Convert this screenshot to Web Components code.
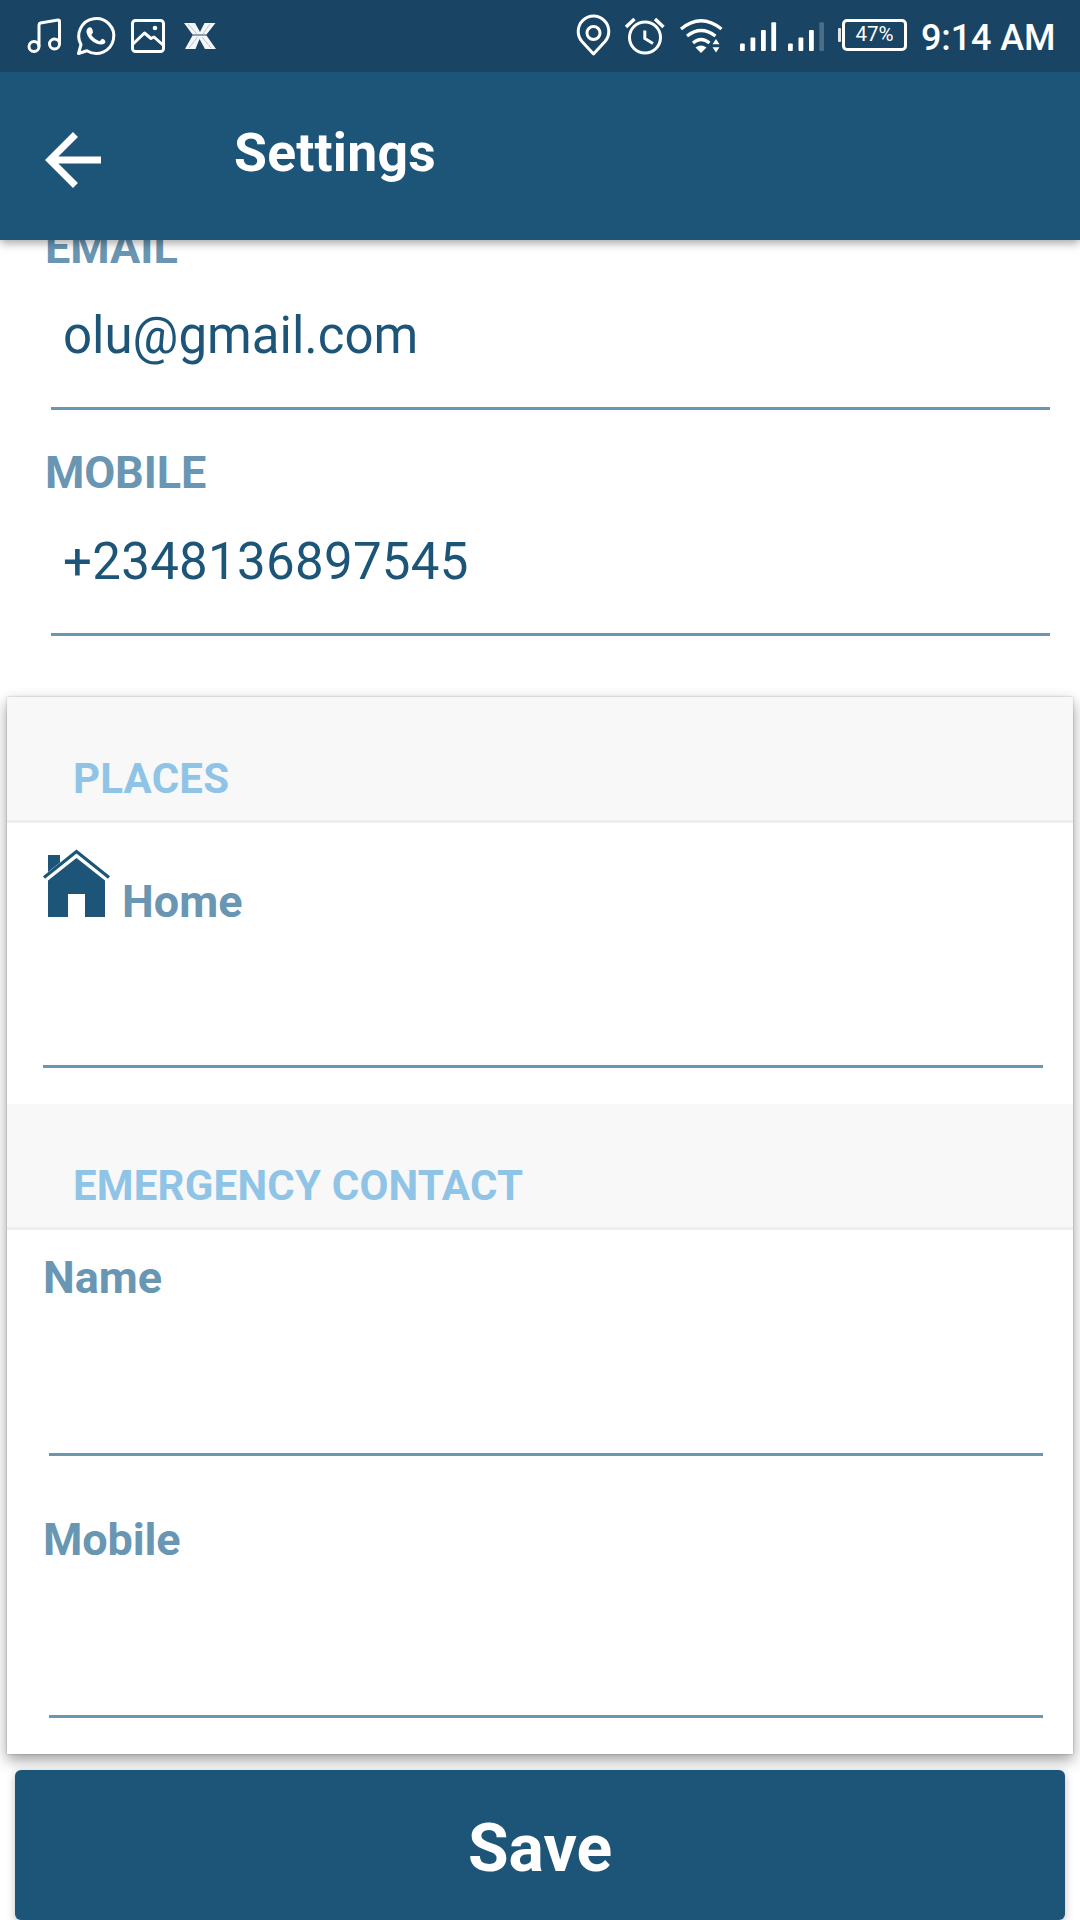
<!DOCTYPE html>
<html lang="en">
<head>
<meta charset="utf-8">
<title>Settings</title>
<style>
html,body{margin:0;padding:0;background:#fff}
body{width:1080px;height:1920px;overflow:hidden;font-family:Roboto,"Noto Sans",sans-serif}
</style>
</head>
<body>
<settings-screen></settings-screen>
<script>
function define(name, html) {
  const t = document.createElement('template');
  t.innerHTML = html;
  customElements.define(name, class extends HTMLElement {
    constructor() {
      super();
      this.attachShadow({ mode: 'open' }).appendChild(t.content.cloneNode(true));
    }
  });
}

define('status-bar', `
<style>
:host{display:flex;height:72px;background:#194463;color:#fff;align-items:flex-start;justify-content:space-between;box-sizing:border-box}
svg{display:block;flex:none}
.right{display:flex;align-items:flex-start}
.bat{display:flex;margin-top:19px;margin-left:14px}
.nub{width:3px;height:14px;background:#dfe6eb;margin:9px 1px 0 0;border-radius:1px}
.cell{box-sizing:border-box;width:65px;height:32px;border:3px solid #fff;border-radius:5px;font-size:20.5px;line-height:25px;text-align:center}
time{font-weight:500;font-size:36px;line-height:44px;margin:16px 0 0 14px;width:159px;white-space:nowrap;letter-spacing:-.12px}
</style>
<svg width="270" height="72" viewBox="0 0 270 72" fill="none" stroke="#fff" stroke-width="3">
 <circle cx="34" cy="46.500" r="5"/><circle cx="54.500" cy="44" r="5"/>
 <path d="M39 46.500V25Q39 23.500 40.500 23L58 20Q59.500 20 59.500 21.500V44"/>
 <path d="M78.500 53.500L81 44.500A17.500 17.500 0 1 1 87 50.800Z" stroke-linejoin="round"/>
 <path d="M89.500 27.200Q92.500 27 93 32.500L91.300 35Q95 40 99.800 41.200L102 38.800Q106 39.600 105.200 43Q102 45.600 97 43.800Q88.500 40.500 86.500 32.500Q86 28.500 89.500 27.200Z" fill="#fff" stroke="none"/>
 <rect x="132.500" y="20.500" width="31" height="31" rx="3"/>
 <path d="M133 44L144.500 33L151 38.500L154 37L163 45" stroke-linejoin="round"/><circle cx="155" cy="28" r="2.300" fill="#fff" stroke="none"/>
 <g stroke="none" fill="#f4f6f8"><path d="M184 23H195L200 32L204.500 23H215.500L206.500 34.500H192.500Z"/><path d="M192.500 35.500H206.500L216 49H205L199.500 39L195.500 49H185Z"/></g>
 <path d="M188 24L197 34M210 24L203 34M197.500 37L189 48M202 37L211 48M193 35H206" stroke="#9fb0bc" stroke-width=".7"/>
</svg>
<div class="right">
<svg width="254" height="72" viewBox="570 0 254 72" fill="none" stroke="#fff" stroke-width="3">
 <path d="M593.500 54L582 41.500A15.300 15.300 0 1 1 605 41.500Z" stroke-linejoin="round"/><circle cx="593.500" cy="33" r="6.500"/>
 <circle cx="645" cy="37.500" r="15.500"/><path d="M644.800 30.500V38.500L653 43.500"/><path d="M626 27L634.500 19M655 19L663.500 27" stroke-width="3.500"/>
 <path d="M681 29Q701 12.500 721.500 29M687 36Q701 25 715.500 36M693 43Q701 36 709.500 43" stroke-width="3.200"/>
 <path d="M695.500 47.500Q701 43.500 706.500 47.500L701 53Z" fill="#fff" stroke="none"/>
 <path d="M716 39L719.500 44.300H712.500ZM716 52.500L719.500 47.200H712.500Z" fill="#fff" stroke="none"/>
 <g fill="#fff" stroke="none"><rect x="740" y="43.500" width="4.800" height="7.500" rx="1"/><rect x="750.500" y="37.500" width="4.800" height="13.500" rx="1"/><rect x="761" y="30" width="4.800" height="21" rx="1"/><rect x="771.300" y="22.300" width="4.800" height="28.700" rx="1"/>
 <rect x="788" y="43.500" width="4.800" height="7.500" rx="1"/><rect x="798.500" y="37.500" width="4.800" height="13.500" rx="1"/><rect x="809" y="30" width="4.800" height="21" rx="1"/><rect x="819.300" y="22.300" width="4.700" height="28.700" rx="1" opacity=".22"/></g>
</svg>
<div class="bat"><div class="nub"></div><div class="cell">47%</div></div>
<time>9:14 AM</time>
</div>`);

define('app-bar', `
<style>
:host{display:flex;height:168px;background:#1d5579;color:#fff;box-shadow:0 3px 9px rgba(0,0,0,.36);position:relative;z-index:2}
svg{display:block;margin:45.500px 0 0 31px;flex:none}
h1{margin:50px 0 0 119px;font-size:53.500px;line-height:62px;font-weight:700;white-space:nowrap;height:62px;letter-spacing:.2px}
</style>
<svg width="84" height="84" viewBox="0 0 24 24" fill="#fff"><path d="M20 11H7.830l5.590-5.590L12 4l-8 8 8 8 1.410-1.410L7.830 13H20v-2z"/></svg>
<h1><slot></slot></h1>`);

define('form-field', `
<style>
:host{display:flex;flex-direction:column;box-sizing:border-box;height:var(--h);padding-left:var(--pl,43px)}
.l{font-weight:700;font-size:45px;line-height:52px;height:52px;color:#6996b2;white-space:nowrap;display:flex;align-items:flex-end;letter-spacing:var(--ls,0)}
.v{font-size:51px;line-height:60px;height:60px;color:#1d5579;margin:var(--vt,33px) 0 0 18px;white-space:nowrap;letter-spacing:var(--vs,0)}
.u{margin:auto var(--ur,30px) 0 var(--ul,6px);height:3px;background:#6996b2}
</style>
<div class="l"><slot name="icon"></slot><slot name="label"></slot></div><div class="v"><slot></slot></div><div class="u"></div>`);

define('home-icon', `
<style>:host{display:block;width:79px;height:80px;flex:none}svg{display:block}</style>
<svg width="68" height="70" viewBox="0 0 68 70" fill="#1d5579"><path d="M5 7H17V14.500L5 24Z"/><path d="M1 29.500L33.500 3.500L66 29.500" fill="none" stroke="#1d5579" stroke-width="3.200"/><path d="M33.500 10L62 32.500V69H42V46H25V69H5V32.500Z"/></svg>`);

define('section-head', `
<style>:host{display:block;box-sizing:border-box;height:126px;background:#f8f8f8;border-bottom:3px solid #eee;color:#8fc4e6;font-weight:700;font-size:42px;line-height:50px;padding:57px 0 0 66px;white-space:nowrap;letter-spacing:.2px}</style><slot></slot>`);

define('settings-card', `
<style>:host{display:block;box-sizing:border-box;width:1066px;height:1057px;margin-left:7px;background:#fff;box-shadow:0 0 2px rgba(0,0,0,.25),0 6px 14px rgba(0,0,0,.38)}</style><slot></slot>`);

define('save-button', `
<style>:host{display:block;width:1050px;height:150px;margin:16px 0 0 15px;border-radius:6px;background:#1d5579;box-shadow:0 3px 8px rgba(0,0,0,.25);color:#fff;font-weight:700;font-size:66px;line-height:158px;text-align:center;position:relative}</style><slot></slot>`);

define('settings-screen', `
<style>
:host{display:block;width:1080px;height:1920px;overflow:hidden}
status-bar{position:relative;z-index:3}
.c1{margin-top:-18px;--h:188px;--pl:45px;--vt:32px}
.c2{--h:226px;--pl:45px;--vs:.3px;--ls:-.15px;padding-top:37px}
settings-card{margin-top:61px}
.p{--h:245px;--pl:36px;--ul:0px;padding-top:53px}
.n{--h:226px;--pl:36px;--ul:6px;padding-top:22px}
.m{--h:262px;--pl:36px;--ul:6px;--ls:-.15px;padding-top:58px}
.gap{height:36px}
</style>
<status-bar></status-bar>
<app-bar>Settings</app-bar>
<form-field class="c1"><span slot="label">EMAIL</span>olu@gmail.com</form-field>
<form-field class="c2"><span slot="label">MOBILE</span>+2348136897545</form-field>
<settings-card>
 <section-head>PLACES</section-head>
 <form-field class="p"><home-icon slot="icon"></home-icon><span slot="label">Home</span></form-field>
 <div class="gap"></div>
 <section-head>EMERGENCY CONTACT</section-head>
 <form-field class="n"><span slot="label">Name</span></form-field>
 <form-field class="m"><span slot="label">Mobile</span></form-field>
</settings-card>
<save-button>Save</save-button>`);
</script>
</body>
</html>
